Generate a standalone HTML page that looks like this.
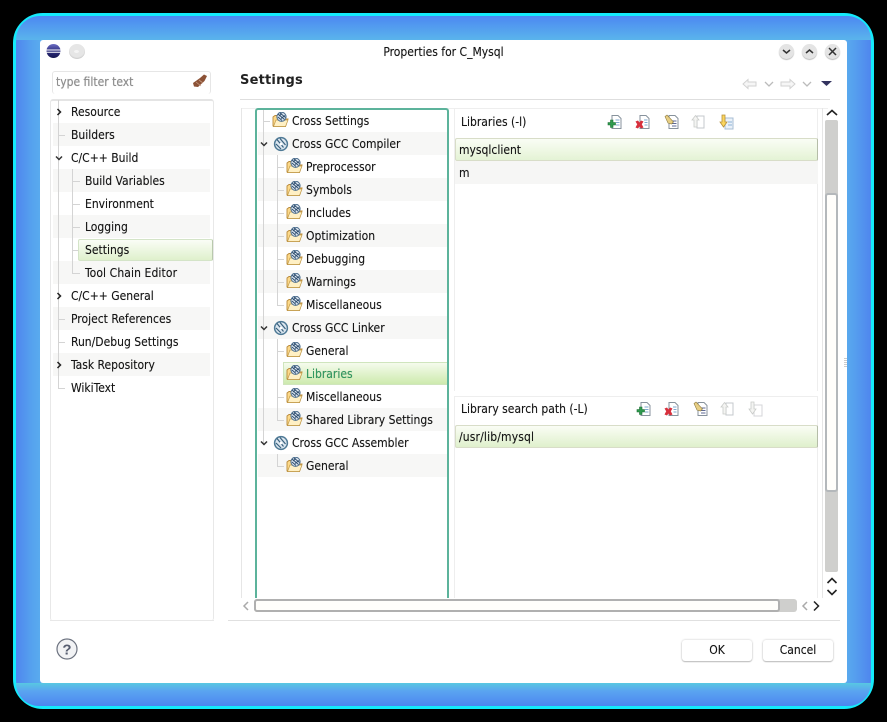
<!DOCTYPE html>
<html><head><meta charset="utf-8">
<style>
html,body{margin:0;padding:0;background:#000;}
#p{position:relative;width:887px;height:722px;overflow:hidden;background:#000;font-family:"DejaVu Sans","Liberation Sans",sans-serif;font-size:11px;color:#222;}
#p div,#p svg{position:absolute;}
.t{white-space:nowrap;line-height:16px;height:16px;font-stretch:condensed;font-family:"DejaVu Sans Condensed","DejaVu Sans",sans-serif;font-size:12px;color:#141414;text-shadow:0 0 .5px rgba(0,0,0,.45);}
.z{background:#f7f7f6;height:23px;}
.ln{background:#d4d4d4;}
</style></head><body>
<div id="p">
<svg width="0" height="0">
<defs>
<g id="f"><path d="M1 14 L1 5 L3 3.500 L7 3.500 L8 5 L13 5 L13 7 L16 7 L13.500 14.500 L1.500 14.500Z" fill="#fcd98a" stroke="#b98a3a" stroke-width=".9"/><path d="M1.500 14.500 L4 8 L16 8 L13.500 14.500Z" fill="#fff0c4" stroke="#c29a4a" stroke-width=".7"/><circle cx="9.500" cy="4.800" r="4.600" fill="#dfe8f2" stroke="#4a6c8c" stroke-width="1"/><path d="M6 2 L12.500 7.500 M8 1 L13.500 5.500 M6 5 L10 8.500 M10 1.500 L7 4 M13 3.500 L9 6.500" stroke="#2f4f70" stroke-width="1"/></g>
<g id="g"><circle cx="8" cy="8" r="6.400" fill="#dbe6ef" stroke="#4f7a96" stroke-width="1.500"/><path d="M4 3.500 L10.500 11.500 M7 2.500 L12.500 9 M3 8 L8 13" stroke="#3a617e" stroke-width="1.200"/><circle cx="8" cy="8" r="1.300" fill="#fff"/></g>
<g id="a"><path d="M5 1.500H11L14 4.500V14.500H5Z" fill="#fff" stroke="#87929c"/><path d="M8.500 6H12.500M9 8.500H12.500M9 11H12.500" stroke="#7fa8d0"/><path d="M1 8.500H3.500V6H6V8.500H8.500V11H6V13.500H3.500V11H1Z" fill="#2f9a4e" stroke="#1c6e33" stroke-width=".6"/></g>
<g id="r"><path d="M5 1.500H11L14 4.500V14.500H5Z" fill="#fff" stroke="#87929c"/><path d="M9 6H12.500M9.500 8.500H12.500M9.500 11H12.500" stroke="#7fa8d0"/><path d="M.5 7.500L3 6.500L4.500 8.500L6 6.500L8.500 7.500L6.800 10.300L8.500 13.500L6 14.500L4.500 12.500L3 14.500L.5 13.500L2.200 10.300Z" fill="#d72f3c"/></g>
<g id="e"><path d="M5 1.500H11L14 4.500V14.500H5Z" fill="#fff" stroke="#87929c"/><path d="M8 7H12.500M8 9.500H12.500M8 12H12.500" stroke="#5f6a96"/><path d="M1 2.500L3 1L9.500 8L7.500 10L4 9Z" fill="#e8cf84" stroke="#8d7a3e" stroke-width=".6"/></g>
<g id="u"><path d="M6 2H13V14H6Z" fill="#fff" stroke="#c4c8cc"/><path d="M1 6L4.500 1.500L8 6H6V13H3V6Z" fill="#f4f4f2" stroke="#c9cbc9" stroke-width=".8"/></g>
<g id="d"><path d="M6 4H14V15H6Z" fill="#eaf1f9" stroke="#a8bed4"/><path d="M9 8H13M9 11H13" stroke="#8fb4d6"/><path d="M1 8L4.500 13L8 8H6V1H3V8Z" fill="#fbd65f" stroke="#b8923a" stroke-width=".8"/></g>
<g id="dd"><path d="M6 4H14V15H6Z" fill="#fff" stroke="#d4d6d8"/><path d="M1 8L4.500 13L8 8H6V1H3V8Z" fill="#f4f4f2" stroke="#c9cbc9" stroke-width=".8"/></g>
<g id="cd"><path d="M2 1.500L5 4.500L8 1.500" fill="none" stroke="#333" stroke-width="1.500"/></g>
<g id="cr"><path d="M1.500 1L4.500 4L1.500 7" fill="none" stroke="#222" stroke-width="1.500"/></g>
</defs>
</svg>

<!-- frame -->
<div style="left:13px;top:13px;width:861px;height:696px;box-sizing:border-box;border:3px solid #14eafb;border-radius:30px;background:linear-gradient(90deg,#4f86ee 0,#56a4ee 2%,#5cb0ee 3.500%,#5cb0ee 96.500%,#56a0ee 98%,#4f86ee 100%);"></div>
<div style="left:16px;top:16px;width:855px;height:24px;border-radius:27px 27px 0 0;background:linear-gradient(180deg,#4c88f2,#5ab4ec);"></div>
<div style="left:16px;top:683px;width:855px;height:23px;border-radius:0 0 27px 27px;background:linear-gradient(180deg,#58c8e2,#5aa4f0 35%,#4c86f0);"></div>
<!-- dialog -->
<div style="left:40px;top:40px;width:807px;height:643px;background:#fff;border-radius:3px;"></div>
<!-- eclipse logo -->
<svg style="left:46px;top:44px" width="16" height="16" viewBox="0 0 16 16"><defs><linearGradient id="ec" x1="0" x2="0" y1="0" y2="1"><stop offset="0" stop-color="#6d6fc4"/><stop offset=".5" stop-color="#2f2f80"/><stop offset="1" stop-color="#15154f"/></linearGradient></defs><circle cx="7.500" cy="7" r="7" fill="url(#ec)"/><path d="M0 6H15M0 8.300H15" stroke="#fff" stroke-width="1"/></svg>
<div style="left:69px;top:44px;width:16px;height:15px;border-radius:50%;background:#e6e6e6;box-shadow:inset 0 -1px 1px #ccc;"></div>
<div style="left:74px;top:50px;width:5px;height:3px;border-radius:50%;background:#f4f4f4;"></div>
<div class="t" style="left:300px;width:287px;top:44px;text-align:center;font-size:12px;">Properties for C_Mysql</div>
<!-- window buttons -->
<div style="left:779px;top:44px;width:15px;height:15px;border-radius:50%;background:#e4e4e4;box-shadow:0 1px 1px #bbb;"></div>
<div style="left:802px;top:44px;width:15px;height:15px;border-radius:50%;background:#e4e4e4;box-shadow:0 1px 1px #bbb;"></div>
<div style="left:825px;top:44px;width:15px;height:15px;border-radius:50%;background:#e4e4e4;box-shadow:0 1px 1px #bbb;"></div>
<svg style="left:779px;top:44px" width="62" height="15"><path d="M4 6L7.500 9L11 6" fill="none" stroke="#333" stroke-width="1.500"/><path d="M27 9L30.500 6L34 9" fill="none" stroke="#333" stroke-width="1.500"/><path d="M50 4L57 11M57 4L50 11" fill="none" stroke="#333" stroke-width="1.500"/></svg>

<!-- filter -->
<div style="left:52px;top:71px;width:159px;height:23px;box-sizing:border-box;border:1px solid #e6e6e6;border-bottom:0;border-radius:3px;"></div>
<div class="t" style="left:56px;top:74px;color:#8f8f8f;">type filter text</div>
<svg style="left:192px;top:73px" width="16" height="16"><path d="M1 10L8 5L12 1.500L15 3L12.500 8L6 14L2 13.500Z" fill="#8c5236"/><path d="M4 9L9 13M7 7L11 10" stroke="#c49a80" stroke-width=".8"/></svg>

<!-- left tree -->
<div style="left:50px;top:99px;width:164px;height:522px;box-sizing:border-box;border:1px solid #e8e8e8;border-top:2px solid #e4e4e4;border-bottom:0;border-radius:3px;"></div>
<div class="z" style="left:53px;top:123px;width:157px;"></div>
<div class="z" style="left:53px;top:169px;width:157px;"></div>
<div class="z" style="left:53px;top:215px;width:157px;"></div>
<div class="z" style="left:53px;top:261px;width:157px;"></div>
<div class="z" style="left:53px;top:307px;width:157px;"></div>
<div class="z" style="left:53px;top:353px;width:157px;"></div>
<div class="ln" style="left:58px;top:100px;width:1px;height:288px;"></div>
<div class="ln" style="left:58px;top:135px;width:7px;height:1px;"></div>
<div class="ln" style="left:58px;top:319px;width:7px;height:1px;"></div>
<div class="ln" style="left:58px;top:342px;width:7px;height:1px;"></div>
<div class="ln" style="left:58px;top:388px;width:7px;height:1px;"></div>
<div class="ln" style="left:72px;top:169px;width:1px;height:104px;"></div>
<div class="ln" style="left:72px;top:181px;width:8px;height:1px;"></div>
<div class="ln" style="left:72px;top:204px;width:8px;height:1px;"></div>
<div class="ln" style="left:72px;top:227px;width:8px;height:1px;"></div>
<div class="ln" style="left:72px;top:250px;width:6px;height:1px;"></div>
<div class="ln" style="left:72px;top:273px;width:8px;height:1px;"></div>
<div style="left:78px;top:239px;width:135px;height:22px;box-sizing:border-box;border:1px solid #d4e4c8;border-right-color:#b9c9ad;border-radius:2px;background:linear-gradient(180deg,#fafdf6,#dff0cc);"></div>
<svg style="left:56px;top:108px" width="6" height="8"><use href="#cr"/></svg>
<svg style="left:54px;top:155px" width="10" height="6"><use href="#cd"/></svg>
<svg style="left:56px;top:292px" width="6" height="8"><use href="#cr"/></svg>
<svg style="left:56px;top:361px" width="6" height="8"><use href="#cr"/></svg>
<div class="t" style="left:71px;top:104px">Resource</div>
<div class="t" style="left:71px;top:127px">Builders</div>
<div class="t" style="left:71px;top:150px">C/C++ Build</div>
<div class="t" style="left:85px;top:173px">Build Variables</div>
<div class="t" style="left:85px;top:196px">Environment</div>
<div class="t" style="left:85px;top:219px">Logging</div>
<div class="t" style="left:85px;top:242px">Settings</div>
<div class="t" style="left:85px;top:265px;letter-spacing:.1px">Tool Chain Editor</div>
<div class="t" style="left:71px;top:288px">C/C++ General</div>
<div class="t" style="left:71px;top:311px">Project References</div>
<div class="t" style="left:71px;top:334px">Run/Debug Settings</div>
<div class="t" style="left:71px;top:357px">Task Repository</div>
<div class="t" style="left:71px;top:380px">WikiText</div>

<!-- title settings -->
<div style="left:240px;top:73px;font-size:13px;line-height:16px;font-weight:bold;color:#222;letter-spacing:.2px;">Settings</div>
<svg style="left:742px;top:76px" width="92" height="16" fill="none"><path d="M1 8L6 3.500V6H14V10H6V12.500Z" fill="#f6f6f6" stroke="#d2d2d2"/><path d="M23 6L27 10L31 6" stroke="#bbb" stroke-width="1.300"/><path d="M53 8L48 3.500V6H39V10H48V12.500Z" fill="#f6f6f6" stroke="#d2d2d2"/><path d="M61 6L65 10L69 6" stroke="#bbb" stroke-width="1.300"/><path d="M79 5H90L84.500 10Z" fill="#33335f"/></svg>
<!-- separators -->
<div style="left:240px;top:99px;width:590px;height:1px;background:#dedede;"></div>
<div style="left:241px;top:108px;width:587px;height:1px;background:#efefef;"></div>
<div style="left:241px;top:108px;width:1px;height:490px;background:#e6e6e6;"></div>
<div style="left:822px;top:108px;width:1px;height:490px;background:#e6e6e6;"></div>
<div style="left:228px;top:620px;width:612px;height:1px;background:#e0e0e0;"></div>
<div style="left:50px;top:620px;width:164px;height:1px;background:#e8e8e8;"></div>

<!-- center tree box -->
<div style="left:255px;top:108px;width:194px;height:490px;box-sizing:border-box;border:2px solid #5cb39b;border-bottom:0;border-radius:3px 3px 0 0;"></div>
<div class="z" style="left:258px;top:132px;width:189px;"></div>
<div class="z" style="left:258px;top:178px;width:189px;"></div>
<div class="z" style="left:258px;top:224px;width:189px;"></div>
<div class="z" style="left:258px;top:270px;width:189px;"></div>
<div class="z" style="left:258px;top:316px;width:189px;"></div>
<div class="z" style="left:258px;top:408px;width:189px;"></div>
<div class="z" style="left:258px;top:454px;width:189px;"></div>
<div style="left:283px;top:362px;width:164px;height:23px;box-sizing:border-box;border:1px solid #cfe5bd;border-right:0;background:linear-gradient(180deg,#f5fbec,#cdeaae);"></div>
<div class="ln" style="left:263px;top:110px;width:1px;height:335px;"></div>
<div class="ln" style="left:263px;top:121px;width:7px;height:1px;"></div>
<div class="ln" style="left:277px;top:155px;width:1px;height:150px;"></div>
<div class="ln" style="left:277px;top:339px;width:1px;height:81px;"></div>
<div class="ln" style="left:277px;top:454px;width:1px;height:12px;"></div>
<div class="ln" style="left:277px;top:167px;width:7px;height:1px;"></div>
<div class="ln" style="left:277px;top:190px;width:7px;height:1px;"></div>
<div class="ln" style="left:277px;top:213px;width:7px;height:1px;"></div>
<div class="ln" style="left:277px;top:236px;width:7px;height:1px;"></div>
<div class="ln" style="left:277px;top:259px;width:7px;height:1px;"></div>
<div class="ln" style="left:277px;top:282px;width:7px;height:1px;"></div>
<div class="ln" style="left:277px;top:305px;width:7px;height:1px;"></div>
<div class="ln" style="left:277px;top:351px;width:7px;height:1px;"></div>
<div class="ln" style="left:277px;top:397px;width:7px;height:1px;"></div>
<div class="ln" style="left:277px;top:420px;width:7px;height:1px;"></div>
<div class="ln" style="left:277px;top:466px;width:7px;height:1px;"></div>
<svg style="left:259px;top:141px" width="10" height="6"><use href="#cd"/></svg>
<svg style="left:259px;top:325px" width="10" height="6"><use href="#cd"/></svg>
<svg style="left:259px;top:440px" width="10" height="6"><use href="#cd"/></svg>
<svg style="left:272px;top:112px" width="17" height="17"><use href="#f"/></svg>
<svg style="left:273px;top:136px" width="16" height="16"><use href="#g"/></svg>
<svg style="left:286px;top:158px" width="17" height="17"><use href="#f"/></svg>
<svg style="left:286px;top:181px" width="17" height="17"><use href="#f"/></svg>
<svg style="left:286px;top:204px" width="17" height="17"><use href="#f"/></svg>
<svg style="left:286px;top:227px" width="17" height="17"><use href="#f"/></svg>
<svg style="left:286px;top:250px" width="17" height="17"><use href="#f"/></svg>
<svg style="left:286px;top:273px" width="17" height="17"><use href="#f"/></svg>
<svg style="left:286px;top:296px" width="17" height="17"><use href="#f"/></svg>
<svg style="left:273px;top:320px" width="16" height="16"><use href="#g"/></svg>
<svg style="left:286px;top:342px" width="17" height="17"><use href="#f"/></svg>
<svg style="left:286px;top:365px" width="17" height="17"><use href="#f"/></svg>
<svg style="left:286px;top:388px" width="17" height="17"><use href="#f"/></svg>
<svg style="left:286px;top:411px" width="17" height="17"><use href="#f"/></svg>
<svg style="left:273px;top:435px" width="16" height="16"><use href="#g"/></svg>
<svg style="left:286px;top:457px" width="17" height="17"><use href="#f"/></svg>
<div class="t" style="left:292px;top:113px">Cross Settings</div>
<div class="t" style="left:292px;top:136px">Cross GCC Compiler</div>
<div class="t" style="left:306px;top:159px">Preprocessor</div>
<div class="t" style="left:306px;top:182px">Symbols</div>
<div class="t" style="left:306px;top:205px">Includes</div>
<div class="t" style="left:306px;top:228px">Optimization</div>
<div class="t" style="left:306px;top:251px">Debugging</div>
<div class="t" style="left:306px;top:274px">Warnings</div>
<div class="t" style="left:306px;top:297px">Miscellaneous</div>
<div class="t" style="left:292px;top:320px">Cross GCC Linker</div>
<div class="t" style="left:306px;top:343px">General</div>
<div class="t" style="left:306px;top:366px;color:#2f9a5f">Libraries</div>
<div class="t" style="left:306px;top:389px">Miscellaneous</div>
<div class="t" style="left:306px;top:412px">Shared Library Settings</div>
<div class="t" style="left:292px;top:435px">Cross GCC Assembler</div>
<div class="t" style="left:306px;top:458px">General</div>

<!-- right libs -->
<div style="left:454px;top:108px;width:364px;height:283px;box-sizing:border-box;border:1px solid #eeeeee;border-bottom:0;"></div>
<div style="left:454px;top:396px;width:364px;height:202px;box-sizing:border-box;border:1px solid #eeeeee;border-bottom:0;"></div>
<div style="left:455px;top:161px;width:363px;height:23px;background:#f6f6f5;"></div>
<div style="left:455px;top:138px;width:363px;height:23px;box-sizing:border-box;border:1px solid #d8ddc8;border-right-color:#b5bda8;border-radius:2px;background:linear-gradient(180deg,#fafdf5,#e4f3d5);"></div>
<div style="left:455px;top:425px;width:363px;height:23px;box-sizing:border-box;border:1px solid #d8ddc8;border-right-color:#b5bda8;border-radius:2px;background:linear-gradient(180deg,#fafdf5,#dff0cc);"></div>
<div class="t" style="left:461px;top:114px">Libraries (-l)</div>
<div class="t" style="left:461px;top:401px">Library search path (-L)</div>
<div class="t" style="left:459px;top:142px">mysqlclient</div>
<div class="t" style="left:459px;top:165px">m</div>
<div class="t" style="left:459px;top:429px;letter-spacing:.15px">/usr/lib/mysql</div>
<svg style="left:607px;top:114px" width="16" height="16"><use href="#a"/></svg>
<svg style="left:635px;top:114px" width="16" height="16"><use href="#r"/></svg>
<svg style="left:664px;top:114px" width="16" height="16"><use href="#e"/></svg>
<svg style="left:691px;top:114px" width="16" height="16"><use href="#u"/></svg>
<svg style="left:719px;top:114px" width="16" height="16"><use href="#d"/></svg>
<svg style="left:636px;top:401px" width="16" height="16"><use href="#a"/></svg>
<svg style="left:664px;top:401px" width="16" height="16"><use href="#r"/></svg>
<svg style="left:693px;top:401px" width="16" height="16"><use href="#e"/></svg>
<svg style="left:720px;top:401px" width="16" height="16"><use href="#u"/></svg>
<svg style="left:748px;top:401px" width="16" height="16"><use href="#dd"/></svg>

<!-- v scrollbar -->
<div style="left:825px;top:120px;width:13px;height:452px;background:#cfcfcd;border-radius:2px;"></div>
<div style="left:825px;top:193px;width:13px;height:299px;box-sizing:border-box;border:2px solid #b4b8bb;border-radius:3px;background:#fffefb;"></div>
<svg style="left:825px;top:108px" width="14" height="10"><path d="M2 7L7 2.500L12 7" fill="none" stroke="#222" stroke-width="1.600"/></svg>
<svg style="left:825px;top:575px" width="14" height="24" fill="none" stroke="#222" stroke-width="1.600"><path d="M2.500 8L7 3.500L11.500 8"/><path d="M2.500 15L7 19.500L11.500 15"/></svg>
<!-- h scrollbar -->
<div style="left:254px;top:599px;width:543px;height:13px;background:#cfcfcd;border-radius:3px;"></div>
<div style="left:254px;top:599px;width:526px;height:13px;box-sizing:border-box;border:2px solid #b0b0b0;border-radius:3px;background:#fffefb;"></div>
<svg style="left:241px;top:600px" width="10" height="12" fill="none" stroke="#aaa" stroke-width="1.500"><path d="M7 2L3 6L7 10"/></svg>
<svg style="left:800px;top:600px" width="24" height="12" fill="none" stroke-width="1.500"><path d="M7 2L3 6L7 10" stroke="#aaa"/><path d="M14 1.500L18.500 6L14 10.500" stroke="#222"/></svg>

<!-- sash dots -->
<div style="left:844px;top:358px;width:3px;height:9px;background:repeating-linear-gradient(180deg,#ccc 0,#ccc 1px,#fff 1px,#fff 2px);"></div>

<!-- help -->
<svg style="left:56px;top:638px" width="22" height="22"><circle cx="11" cy="11" r="10" fill="#f2f3f5" stroke="#6d7380" stroke-width="1.200"/><text x="11" y="16.500" text-anchor="middle" font-family="Liberation Sans" font-weight="bold" font-size="15" fill="#565d70">?</text></svg>
<!-- buttons -->
<div class="t" style="left:682px;top:640px;width:70px;height:21px;line-height:21px;text-align:center;border-radius:3px;box-shadow:0 0 2px #c4c4c4,0 1px 1px #bbb;background:#fff;">OK</div>
<div class="t" style="left:763px;top:640px;width:70px;height:21px;line-height:21px;text-align:center;border-radius:3px;box-shadow:0 0 2px #c4c4c4,0 1px 1px #bbb;background:#fff;">Cancel</div>
</div>
</body></html>
